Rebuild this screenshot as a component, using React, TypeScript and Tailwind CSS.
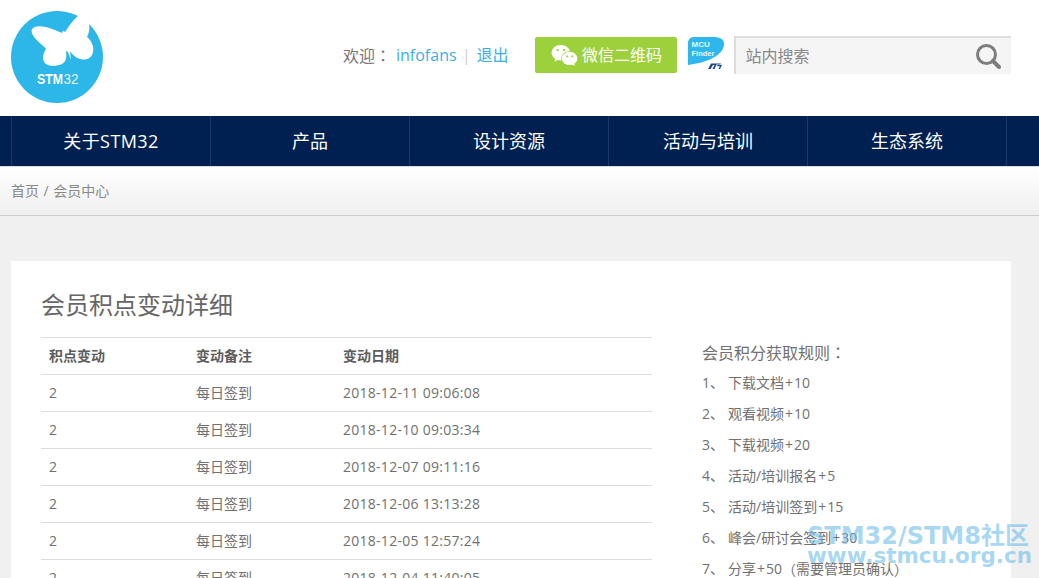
import { FaWeixin } from "react-icons/fa";

const font = { fontFamily: '"Open Sans", "Noto Sans CJK SC", sans-serif' };
const centered = { fontFamily: '"Noto Sans CJK TC", sans-serif' };

const nav = ["关于STM32", "产品", "设计资源", "活动与培训", "生态系统"];

const rows = [
  ["2", "每日签到", "2018-12-11 09:06:08"],
  ["2", "每日签到", "2018-12-10 09:03:34"],
  ["2", "每日签到", "2018-12-07 09:11:16"],
  ["2", "每日签到", "2018-12-06 13:13:28"],
  ["2", "每日签到", "2018-12-05 12:57:24"],
  ["2", "每日签到", "2018-12-04 11:40:05"],
];

const rules = [
  ["下载文档", "10"],
  ["观看视频", "10"],
  ["下载视频", "20"],
  ["活动/培训报名", "5"],
  ["活动/培训签到", "15"],
  ["峰会/研讨会签到", "30"],
];

function Logo() {
  return (
    <svg width="92" height="92" viewBox="11 11 92 92" className="shrink-0">
      <circle cx="57" cy="57" r="46" fill="#2db7e8" />
      <path
        d="M32 29C36 25 44 26 52 29C56 30.500 60 32 62 33L63 30.500L65 32C69 26 74 19 79 15C84 18 88 22 90 25L89 24C90 29 89 33 87 37C92 41 94 47 93 52C92 57 88 60 83 59.500C78 59 73 56 70 51L71 60L68 52L66 51C67 57 66 62 62 64C58 66 50 67 46 64C42 61 42 55 46 49C44 46 38 42 35 38C32 35 31 31 32 29Z"
        fill="#fff"
      />
      <text x="37" y="83.500" fontSize="14" fontFamily="Liberation Sans" fontWeight="700" fill="#fff" textLength="26" lengthAdjust="spacingAndGlyphs">
        STM
      </text>
      <text x="63.500" y="83.500" fontSize="14" fontFamily="Liberation Sans" fill="#e4f5fc" textLength="15" lengthAdjust="spacingAndGlyphs">
        32
      </text>
    </svg>
  );
}

function McuFinder() {
  return (
    <svg width="38" height="36" viewBox="0 0 38 36" className="shrink-0">
      <path d="M1 7C1 3 4 1 7 1H26C33 1 37 3 37 8C37 17 25 26 1 29Z" fill="#2db7ec" />
      <text x="4.500" y="11" fontSize="8" fontWeight="700" fontFamily="Liberation Sans" fill="#e8f7fd">
        MCU
      </text>
      <text x="4.500" y="19.500" fontSize="7.500" fontWeight="700" fontFamily="Liberation Sans" fill="#e8f7fd">
        Finder
      </text>
      <path d="M24 27.500H34L33.500 28.500H29.500L27.500 33H25.500L27.500 29H26L23.500 33H21Z" fill="#1b4a8a" />
      <path d="M30.500 29H35L33 33H31.500L33 30.200H30Z" fill="#1b4a8a" />
    </svg>
  );
}

function Header() {
  return (
    <header className="flex h-[116px] items-start bg-white pt-[11px] pl-[11px]">
      <Logo />
      <div className="mt-[25px] flex h-[38px] items-center">
        <div className="ml-[240px] flex items-center text-base text-[#777]">
          <span className="w-[53px]">
            欢迎<span style={centered}>：</span>
          </span>
          <a className="text-[#3caee6]">infofans</a>
          <span className="mx-[5.5px] text-[#ccc]">|</span>
          <a className="text-[#3caee6]">退出</a>
        </div>
        <button className="ml-[27px] flex h-9 w-[142px] items-center justify-center gap-[4px] rounded-[2px] bg-[#9dd13b] text-base text-white">
          <FaWeixin className="text-[27px]" />
          微信二维码
        </button>
        <div className="mb-[2px] ml-[10px]">
          <McuFinder />
        </div>
        <div className="ml-[9px] flex h-[38px] w-[277px] items-center justify-between border-t-2 border-l-2 border-[#ddd] bg-[#f5f5f5] pr-[10px] pl-[9px]">
          <span className="text-base text-[#888]">站内搜索</span>
          <svg width="26" height="26" viewBox="0 0 26 26" fill="none" stroke="#7d7d7d">
            <circle cx="11.500" cy="11.500" r="9" strokeWidth="3" />
            <path d="M18 18L24 24" strokeWidth="4" strokeLinecap="round" />
          </svg>
        </div>
      </div>
    </header>
  );
}

function Nav() {
  return (
    <nav className="flex h-[50px] bg-[#002051] pl-[11px]">
      {nav.map((item, i) => (
        <a
          key={item}
          className={
            i === 0
              ? "flex w-[199px] items-center justify-center border-l border-[#15396b] text-lg tracking-[0.4px] text-white"
              : "flex w-[199px] items-center justify-center border-l border-[#15396b] text-lg text-white"
          }
        >
          {item}
        </a>
      ))}
      <div className="border-l border-[#15396b]" />
    </nav>
  );
}

export default function App() {
  return (
    <div className="relative h-[578px] overflow-hidden bg-[#f0f0f0]" style={font}>
      <Header />
      <Nav />
      <div className="flex h-[50px] items-center border-t border-b border-t-[#ddd] border-b-[#ccc] bg-gradient-to-b from-white to-[#efefef] pl-[11px] text-sm text-[#888]">
        首页<span className="mx-[4.5px]">/</span>会员中心
      </div>
      <main className="mt-[45px] ml-[11px] flex h-[400px] w-[1000px] bg-white pl-[30px]">
        <div className="w-[611px]">
          <h1 className="mt-[27px] mb-[15px] text-2xl leading-[34px] text-[#666]">会员积点变动详细</h1>
          <table className="w-full border-t border-[#ddd] text-sm text-[#707070]">
            <thead>
              <tr className="h-[37px] border-b border-[#ddd] text-left text-[#5c5c5c]">
                <th className="w-[147px] px-2 font-bold">积点变动</th>
                <th className="w-[147px] px-2 font-bold">变动备注</th>
                <th className="px-2 font-bold">变动日期</th>
              </tr>
            </thead>
            <tbody>
              {rows.map((r) => (
                <tr key={r[2]} className="h-[37px] border-b border-[#ddd]">
                  <td className="px-2">{r[0]}</td>
                  <td className="px-2">{r[1]}</td>
                  <td className="px-2 tracking-[0.27px]">{r[2]}</td>
                </tr>
              ))}
            </tbody>
          </table>
        </div>
        <div className="ml-[50px] pt-[79px] text-sm text-[#707070]">
          <p className="mb-[2px] text-base leading-6">
            会员积分获取规则<span style={centered}>：</span>
          </p>
          {rules.map((r, i) => (
            <p key={r[0]} className="flex h-[31px] items-center">
              <span className="w-[26px]">{i + 1}、</span>
              {r[0]}
              <span className="px-px">+</span>
              {r[1]}
            </p>
          ))}
          <p className="flex h-[31px] items-center">
            <span className="w-[26px]">7、</span>
            分享<span className="px-px">+</span>50<span style={centered}>（</span>需要管理员确认
            <span style={centered}>）</span>
          </p>
        </div>
      </main>
      <div
        className="absolute top-[523px] left-[807px] font-bold text-[#6ebee9]/60"
        style={{ fontFamily: '"DejaVu Sans", "Noto Sans CJK SC", sans-serif' }}
      >
        <div className="text-[24px] leading-[26px] whitespace-nowrap">STM32/STM8社区</div>
        <div className="text-[21.500px] leading-[14px] whitespace-nowrap">www.stmcu.org.cn</div>
      </div>
    </div>
  );
}
